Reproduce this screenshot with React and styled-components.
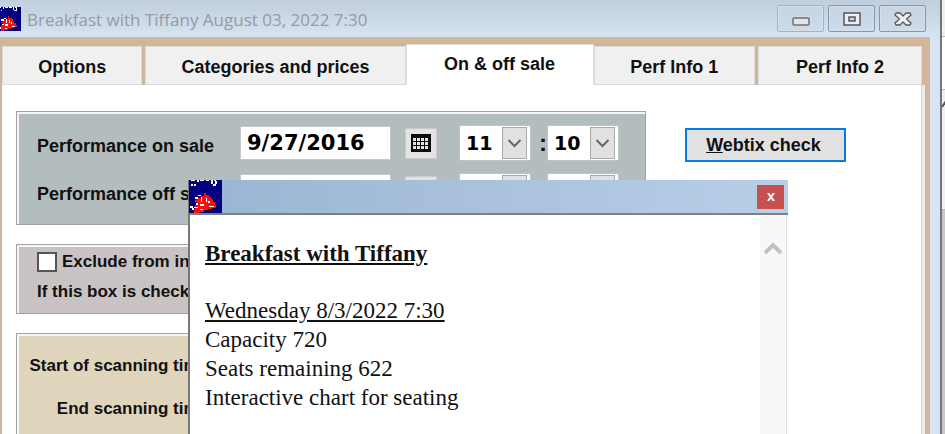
import React, { useState } from "react";
import styled, { createGlobalStyle } from "styled-components";

const GlobalStyle = createGlobalStyle`
  * {
    box-sizing: border-box;
  }
  body {
    margin: 0;
    overflow: hidden;
    background: #f0f0f0;
    color: #111;
    font-family: "Liberation Sans", Arial, sans-serif;
    font-size: 18px;
    font-weight: bold;
    line-height: 20px;
  }
`;

const Desktop = styled.div`
  display: flex;
  min-height: 100vh;
`;

const MainWindow = styled.main`
  position: relative;
  flex: 1;
  display: flex;
  flex-direction: column;
  border-right: 2px solid #77757a;
  background: #d8e4f2;
`;

const BehindStrip = styled.div`
  width: 3px;
  display: flex;
  flex-direction: column;
  div {
    border-bottom: 1px solid #b5b5b5;
  }
  .top {
    height: 37px;
  }
  .middle {
    height: 53px;
    background: #fff;
  }
  .mark {
    height: 120px;
    padding-top: 8px;
  }
  .bottom {
    flex: 1;
    background: #c9c7c7;
  }
  svg {
    display: block;
  }
`;

const TitleBar = styled.header`
  display: flex;
  align-items: center;
  height: 37px;
  padding-right: 14px;
  background: linear-gradient(#c0cedd, #d6e3f1);
  h1 {
    flex: 1;
    margin: 2px 0 0 6px;
    color: #999a9d;
    font-family: "Open Sans", "Noto Sans", sans-serif;
    font-size: 17px;
    font-weight: normal;
  }
`;

const WindowButtons = styled.div`
  display: flex;
  gap: 4px;
`;

const WindowButton = styled.button`
  display: flex;
  align-items: center;
  justify-content: center;
  width: 47px;
  height: 27px;
  padding: 0;
  border: 1px solid ${(props) => (props.$dim ? "#a3b2c4" : "#8796b0")};
  border-radius: 2px;
  background: linear-gradient(#c6d4e3, #cddbea);
  box-shadow: inset 0 0 0 1px #d3dfeb;
`;

const Frame = styled.div`
  flex: 1;
  display: flex;
  flex-direction: column;
  margin-right: 10px;
  padding: 7px 5px 0 2px;
  background: #d1b699;
`;

const TabList = styled.div`
  display: flex;
  align-items: flex-end;
  height: 41px;
  padding-right: 3px;
`;

const Tab = styled.button`
  flex: ${(props) => props.$grow} 1 0;
  height: ${(props) => (props.$active ? 41 : 39)}px;
  margin-right: ${(props) => (props.$gap ? 3 : 0)}px;
  padding: ${(props) => (props.$active ? "0 0 2px" : "2px 0 0")};
  border: 1px solid #dcdcdc;
  border-bottom-color: ${(props) => (props.$active ? "#fff" : "#d9d9d9")};
  background: ${(props) => (props.$active ? "#fff" : "#f0f0f0")};
  color: #111;
  font: inherit;
`;

const Panel = styled.section`
  flex: 1;
  display: flex;
  align-items: flex-start;
  gap: 39px;
  padding: 26px 76px 0 14px;
  border-right: 3px solid #ececec;
  background: #fff;
  box-shadow: inset -1px 0 0 #d2d2d2;
`;

const Groups = styled.div`
  flex: 1;
  display: flex;
  flex-direction: column;
  gap: 19px;
`;

const Group = styled.fieldset`
  min-width: 0;
  min-height: ${(props) => props.$minHeight}px;
  margin: 0;
  padding: ${(props) => props.$padding};
  border: 1px solid #a3a3a3;
  background: ${(props) => props.$color};
  box-shadow: inset 2px 2px 0 #f6f6f6;
`;

const SaleRow = styled.div`
  display: flex;
  align-items: center;
  height: 36px;
  & + & {
    margin-top: 12px;
  }
  > label {
    width: 203px;
    padding-top: 6px;
    white-space: nowrap;
  }
`;

const DateInput = styled.input`
  width: 151px;
  height: 34px;
  margin-right: 14px;
  padding: 0 6px;
  border: 1px solid #c4c8c8;
  background: #fff;
  color: #000;
  font: bold 21px "DejaVu Sans", Verdana, sans-serif;
`;

const CalendarButton = styled.button`
  display: flex;
  align-items: center;
  justify-content: center;
  width: 32px;
  height: 31px;
  margin-right: 22px;
  padding: 0;
  border: 1px solid #c9c9c9;
  background: #e3e3e3;
`;

const TimeSelect = styled.span`
  display: grid;
  grid-template-columns: 1fr 28px;
  align-items: center;
  width: 72px;
  height: 36px;
  border: 1px solid #bfc3c3;
  background: #fff;
  select {
    grid-area: 1 / 1 / 2 / 3;
    height: 34px;
    padding: 0 0 0 6px;
    border: 0;
    appearance: none;
    background: transparent;
    color: #000;
    font: bold 19px "DejaVu Sans", Verdana, sans-serif;
  }
  svg {
    grid-area: 1 / 2 / 2 / 3;
    pointer-events: none;
  }
`;

const Colon = styled.span`
  width: 16px;
  text-align: right;
  font-size: 24px;
`;

const CheckRow = styled.div`
  display: flex;
  align-items: center;
  gap: 5px;
  height: 20px;
  white-space: nowrap;
  font-size: 17px;
  input {
    width: 20px;
    height: 20px;
    margin: 0;
    border: 2px solid #555;
    appearance: none;
    background: #fff;
  }
  input:checked {
    background: #555;
  }
`;

const Note = styled.p`
  margin: 10px 0 0;
  font-size: 17px;
  white-space: nowrap;
`;

const ScanRow = styled.div`
  display: grid;
  grid-template-columns: 180px 150px;
  align-items: center;
  gap: 8px;
  height: 34px;
  font-size: 17px;
  text-align: right;
  & + & {
    margin-top: 9px;
  }
`;

const CheckButton = styled.button`
  width: 161px;
  height: 34px;
  margin-top: 17px;
  padding: 0 4px 0 0;
  border: 2px solid #0a7bdc;
  background: #e1e1e1;
  color: #111;
  font: inherit;
`;

const Popup = styled.div`
  position: absolute;
  top: 180px;
  right: 153px;
  bottom: 0;
  left: 188px;
  display: flex;
  flex-direction: column;
  border-left: 2px solid #777;
  border-right: 1px solid #dcdcdc;
  background: #fff;
`;

const PopupBar = styled.div`
  display: flex;
  align-items: center;
  justify-content: space-between;
  margin: 0 -2px 0 -1px;
  padding-right: 4px;
  border-bottom: 2px solid #808080;
  background: linear-gradient(90deg, #9ab4d3, #b9cfe8);
`;

const PopupClose = styled.button`
  display: flex;
  align-items: center;
  justify-content: center;
  width: 27px;
  height: 24px;
  padding: 0;
  border: 0;
  background: #c75050;
`;

const PopupBody = styled.div`
  flex: 1;
  display: flex;
  justify-content: space-between;
`;

const Report = styled.article`
  padding: 24px 0 0 15px;
  color: #111;
  font: 23px/29px "Liberation Serif", "Times New Roman", serif;
  h2 {
    margin: 0 0 28px;
    font: inherit;
    font-weight: bold;
  }
  p {
    margin: 0;
  }
`;

const ScrollTrack = styled.div`
  width: 26px;
  padding: 24px 0 0 4px;
  background: #f8f8f8;
`;

const TheatreIcon = ({ width, height, viewBox }) => (
  <svg width={width} height={height} viewBox={viewBox} shapeRendering="crispEdges">
    <rect width="33" height="33" fill="#000080" />
    <path
      fill="#fff"
      d="M2 0h4v1H2zM8 0h2v2H8zM11 0h4v1h-4zM17 0h3v1h-3zM2 4h2v2H2zM5 4h2v2H5zM22 0h2v4h-2zM24 4h3v2h-3zM25 0h2v1h-2zM26 1h2v3h-2zM1 26h3v2H1zM3 28h2v2H3z"
    />
    <path fill="#000" d="M16 28h6v4h-6zM23 25h4v4h-4z" />
    <path
      fill="#ff0d0d"
      d="M15 13h2v2h3v2h2v2h2v3h2v3h1v3h-4v1h-4v1h-4v2h-5v1H5v-4h1v-4h2v-3h-2v-2h2v-2h4v-2h3z"
    />
    <path
      fill="#fff"
      d="M9 15h3v1H9zM6 17h3v2H6zM12 17h1v5h-1zM17 18h1v4h-1zM7 23h2v2H7zM11 24h4v2h-4zM19 21h2v2h-2zM5 27h4v1H5zM11 29h3v1h-3zM20 26h5v1h-5z"
    />
  </svg>
);

const CalendarIcon = () => (
  <svg width="20" height="18" viewBox="0 0 20 18" shapeRendering="crispEdges">
    <rect width="20" height="18" fill="#0a0a0a" />
    {[4, 8, 12].map((y) =>
      [2, 6, 10, 14].map((x) => (
        <rect key={`${x}-${y}`} x={x} y={y} width="3" height="3" fill="#e3e3e3" />
      ))
    )}
  </svg>
);

const DropArrow = () => (
  <svg width="25" height="32" viewBox="0 0 25 32">
    <rect x="0.5" y="0.5" width="24" height="31" fill="#e1e1e1" stroke="#a9a9a9" />
    <path d="M6.500 13l6 6 6-6" fill="none" stroke="#666" strokeWidth="2" />
  </svg>
);

const TimePicker = ({ label, initial, options }) => {
  const [value, setValue] = useState(initial);
  return (
    <TimeSelect>
      <select aria-label={label} value={value} onChange={(e) => setValue(e.target.value)}>
        {options.map((option) => (
          <option key={option}>{option}</option>
        ))}
      </select>
      <DropArrow />
    </TimeSelect>
  );
};

const hours = ["8", "9", "10", "11", "12"];
const minutes = ["00", "10", "20", "30", "40", "50"];

const SaleDate = ({ id, label }) => {
  const [date, setDate] = useState("9/27/2016");
  return (
    <SaleRow>
      <label htmlFor={id}>{label}</label>
      <DateInput id={id} value={date} onChange={(e) => setDate(e.target.value)} />
      <CalendarButton type="button" aria-label={`${label} calendar`}>
        <CalendarIcon />
      </CalendarButton>
      <TimePicker label={`${label} hour`} initial="11" options={hours} />
      <Colon>:</Colon>
      <TimePicker label={`${label} minute`} initial="10" options={minutes} />
    </SaleRow>
  );
};

const tabs = [
  { name: "Options", grow: 140, gap: true },
  { name: "Categories and prices", grow: 261 },
  { name: "On & off sale", grow: 188 },
  { name: "Perf Info 1", grow: 161, gap: true },
  { name: "Perf Info 2", grow: 164 },
];

const App = () => {
  const [activeTab, setActiveTab] = useState("On & off sale");
  return (
    <>
      <GlobalStyle />
      <Desktop>
        <MainWindow>
          <TitleBar>
            <TheatreIcon width={21} height={24} viewBox="4 0 29 33" />
            <h1>Breakfast with Tiffany August 03, 2022 7:30</h1>
            <WindowButtons>
              <WindowButton type="button" aria-label="Minimize" $dim>
                <svg width="18" height="18" viewBox="0 0 18 18">
                  <rect x="1" y="8" width="16" height="7" rx="1" fill="#e4e4e4" stroke="#707075" strokeWidth="1.500" />
                </svg>
              </WindowButton>
              <WindowButton type="button" aria-label="Maximize">
                <svg width="18" height="14" viewBox="0 0 18 14">
                  <path
                    fillRule="evenodd"
                    d="M1 1h16v12H1zM6 5h6v4H6z"
                    fill="#eee"
                    stroke="#55565e"
                    strokeWidth="1.500"
                  />
                </svg>
              </WindowButton>
              <WindowButton type="button" aria-label="Close">
                <svg width="18" height="14" viewBox="0 0 18 14">
                  <path
                    d="M2 1h4l3 3 3-3h4l1 2-4.500 4 4.500 4-1 2h-4l-3-3-3 3H2l-1-2 4.500-4L1 3z"
                    fill="#eee"
                    stroke="#55565e"
                    strokeWidth="1.300"
                    strokeLinejoin="round"
                  />
                </svg>
              </WindowButton>
            </WindowButtons>
          </TitleBar>
          <Frame>
            <TabList role="tablist">
              {tabs.map((tab) => (
                <Tab
                  key={tab.name}
                  type="button"
                  role="tab"
                  aria-selected={tab.name === activeTab}
                  $active={tab.name === activeTab}
                  $grow={tab.grow}
                  $gap={tab.gap}
                  onClick={() => setActiveTab(tab.name)}
                >
                  {tab.name}
                </Tab>
              ))}
            </TabList>
            <Panel>
              <Groups>
                <Group $color="#b3bdbd" $minHeight={114} $padding="13px 0 14px 20px">
                  <SaleDate id="on-sale" label="Performance on sale" />
                  <SaleDate id="off-sale" label="Performance off sale" />
                </Group>
                <Group $color="#cac3c4" $minHeight={70} $padding="7px 0 0 20px">
                  <CheckRow>
                    <input type="checkbox" id="exclude" />
                    <label htmlFor="exclude">Exclude from in</label>
                  </CheckRow>
                  <Note>If this box is checked</Note>
                </Group>
                <Group $color="#dfd5bc" $minHeight={120} $padding="15px 0 0 11px">
                  <ScanRow>
                    <label htmlFor="scan-start">Start of scanning time</label>
                    <DateInput id="scan-start" />
                  </ScanRow>
                  <ScanRow>
                    <label htmlFor="scan-end">End scanning time</label>
                    <DateInput id="scan-end" />
                  </ScanRow>
                </Group>
              </Groups>
              <CheckButton type="button">
                <u>W</u>ebtix check
              </CheckButton>
            </Panel>
          </Frame>
          <Popup role="dialog" aria-label="Webtix check">
            <PopupBar>
              <TheatreIcon width={33} height={33} viewBox="0 0 33 33" />
              <PopupClose type="button" aria-label="Close report">
                <svg width="8" height="8" viewBox="0 0 8 8">
                  <path d="M1 0l6 8M7 0L1 8" stroke="#fff" strokeWidth="2" />
                </svg>
              </PopupClose>
            </PopupBar>
            <PopupBody>
              <Report>
                <h2>
                  <u>Breakfast with Tiffany</u>
                </h2>
                <p>
                  <u>Wednesday 8/3/2022 7:30</u>
                </p>
                <p>Capacity 720</p>
                <p>Seats remaining 622</p>
                <p>Interactive chart for seating</p>
              </Report>
              <ScrollTrack>
                <svg width="18" height="14" viewBox="0 0 18 14">
                  <path d="M1 12l8-8 8 8" fill="none" stroke="#c0c0c0" strokeWidth="4" />
                </svg>
              </ScrollTrack>
            </PopupBody>
          </Popup>
        </MainWindow>
        <BehindStrip>
          <div className="top" />
          <div className="middle" />
          <div className="mark">
            <svg width="3" height="10" viewBox="0 0 3 10">
              <path d="M0 9l4-6" stroke="#555" strokeWidth="2" />
            </svg>
          </div>
          <div className="bottom" />
        </BehindStrip>
      </Desktop>
    </>
  );
};

export default App;
